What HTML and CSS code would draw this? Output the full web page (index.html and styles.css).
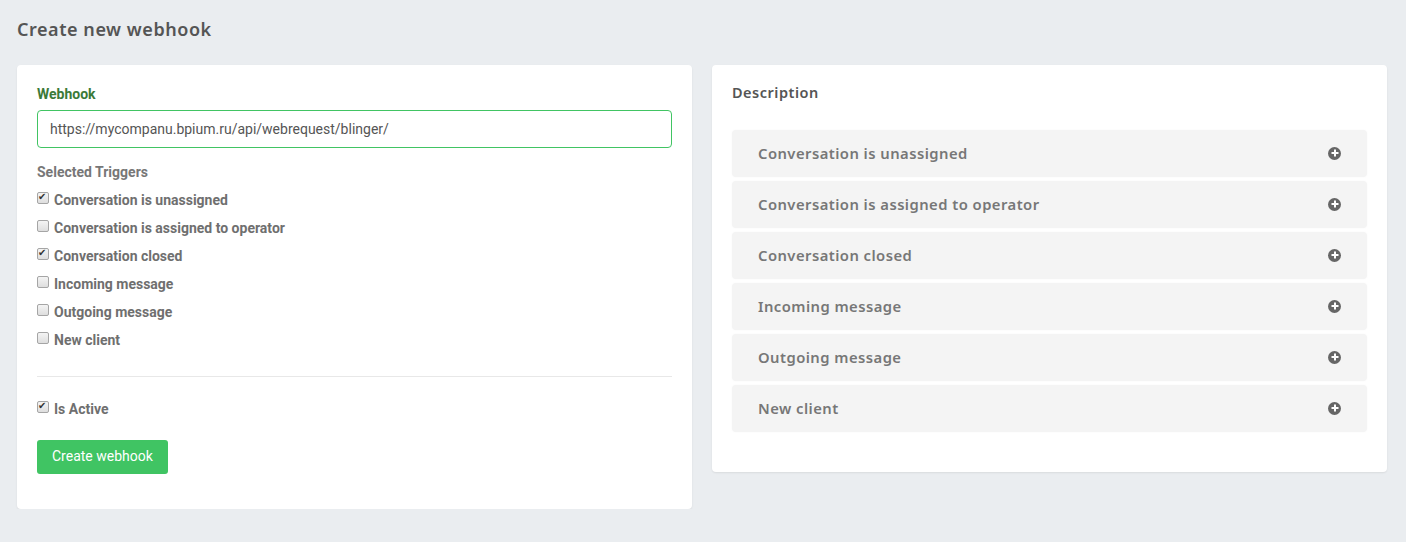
FILE: index.html
```html
<!DOCTYPE html>
<html lang="en">
<head>
<meta charset="utf-8">
<title>Create new webhook</title>
<link rel="stylesheet" href="styles.css">
</head>
<body>
<div class="page">
  <h1 class="page-title">Create new webhook</h1>
  <div class="columns">
    <div class="card card-form">
      <label class="field-label" for="url">Webhook</label>
      <input id="url" class="text-input" type="text" value="https://mycompanu.bpium.ru/api/webrequest/blinger/">
      <div class="section-label">Selected Triggers</div>
      <div class="checks">
        <label class="check"><input type="checkbox" checked><span>Conversation is unassigned</span></label>
        <label class="check"><input type="checkbox"><span>Conversation is assigned to operator</span></label>
        <label class="check"><input type="checkbox" checked><span>Conversation closed</span></label>
        <label class="check"><input type="checkbox"><span>Incoming message</span></label>
        <label class="check"><input type="checkbox"><span>Outgoing message</span></label>
        <label class="check"><input type="checkbox"><span>New client</span></label>
      </div>
      <hr class="divider">
      <label class="check check-active"><input type="checkbox" checked><span>Is Active</span></label>
      <button class="btn" type="button">Create webhook</button>
    </div>
    <div class="card card-desc">
      <h2 class="desc-title">Description</h2>
      <div class="acc">
        <div class="acc-item"><span>Conversation is unassigned</span><i class="plus"></i></div>
        <div class="acc-item"><span>Conversation is assigned to operator</span><i class="plus"></i></div>
        <div class="acc-item"><span>Conversation closed</span><i class="plus"></i></div>
        <div class="acc-item"><span>Incoming message</span><i class="plus"></i></div>
        <div class="acc-item"><span>Outgoing message</span><i class="plus"></i></div>
        <div class="acc-item"><span>New client</span><i class="plus"></i></div>
      </div>
    </div>
  </div>
</div>
</body>
</html>
```
FILE: styles.css
```css
* { box-sizing: border-box; }
html, body { margin: 0; padding: 0; }
body {
  background: #eaedf0;
  font-family: Roboto, "Liberation Sans", Arial, sans-serif;
  color: #555;
}
.page { padding: 17px 19px 0 17px; }
.page-title {
  margin: 0;
  font-family: "Noto Sans", "Open Sans", sans-serif;
  font-weight: 600;
  font-size: 18px;
  line-height: 24px;
  color: #555;
  letter-spacing: 0.55px;
}
.columns {
  display: flex;
  align-items: flex-start;
  gap: 20px;
  margin-top: 24px;
}
.card {
  flex: 1 1 0;
  background: #fff;
  border-radius: 4px;
  box-shadow: 0 1px 2px rgba(0,0,0,0.08);
}
.card-form { padding: 20px 20px 35px 20px; display: flex; flex-direction: column; }
.field-label {
  font-weight: 700;
  font-size: 14px;
  line-height: 18px;
  color: #3b7a38;
}
.text-input {
  margin-top: 7px;
  height: 38px;
  width: 100%;
  border: 1px solid #41c463;
  border-radius: 4px;
  padding: 0 12px;
  font-family: Roboto, "Liberation Sans", sans-serif;
  font-size: 14px;
  color: #555;
  outline: none;
}
.section-label {
  margin-top: 15px;
  font-weight: 700;
  font-size: 14px;
  line-height: 18px;
  color: #777;
}
.checks { display: flex; flex-direction: column; margin-top: 5px; }
.check {
  display: flex;
  align-items: center;
  height: 28px;
  font-weight: 700;
  font-size: 14px;
  color: #6f6f6f;
}
.check input {
  appearance: none;
  -webkit-appearance: none;
  width: 12px;
  height: 12px;
  margin: 0 5px 0 0;
  border: 1px solid #a5a5a5;
  border-radius: 2px;
  background: linear-gradient(#f4f4f4, #dedede);
  position: relative;
  top: -2px;
}
.check input:checked::after {
  content: "\2714";
  position: absolute;
  left: 0px;
  top: -3px;
  font-size: 10px;
  line-height: 14px;
  color: #333;
  font-family: "DejaVu Sans", sans-serif;
}
.divider {
  width: 100%;
  border: 0;
  border-top: 1px solid #e8e8e8;
  margin: 22px 0 18px 0;
}
.check-active { height: 28px; }
.btn {
  align-self: flex-start;
  margin-top: 17px;
  height: 34px;
  padding: 0 15px 2px 15px;
  background: #40c463;
  color: #fff;
  border: 0;
  border-radius: 3px;
  font-family: Roboto, "Liberation Sans", sans-serif;
  font-size: 14px;
}
.card-desc { padding: 17px 20px 40px 20px; }
.desc-title {
  margin: 0;
  font-family: "Noto Sans", "Open Sans", sans-serif;
  font-weight: 600;
  font-size: 14.5px;
  line-height: 20px;
  color: #555;
  letter-spacing: 0.5px;
}
.acc { margin-top: 28px; display: flex; flex-direction: column; gap: 4px; }
.acc-item {
  height: 47px;
  display: flex;
  align-items: center;
  justify-content: space-between;
  padding: 0 26px 1px 26px;
  background: #f4f4f4;
  border-radius: 4px;
  box-shadow: 0 0 2px rgba(0,0,0,0.04);
  font-family: "Noto Sans", "Open Sans", sans-serif;
  font-weight: 600;
  font-size: 14.8px;
  color: #777;
  letter-spacing: 0.45px;
}
.plus {
  width: 13px;
  height: 13px;
  border-radius: 50%;
  background: #666;
  position: relative;
}
.plus::before, .plus::after {
  content: "";
  position: absolute;
  background: #fff;
  left: 50%;
  top: 50%;
  transform: translate(-50%, -50%);
}
.plus::before { width: 7px; height: 2px; }
.plus::after { width: 2px; height: 7px; }
```
